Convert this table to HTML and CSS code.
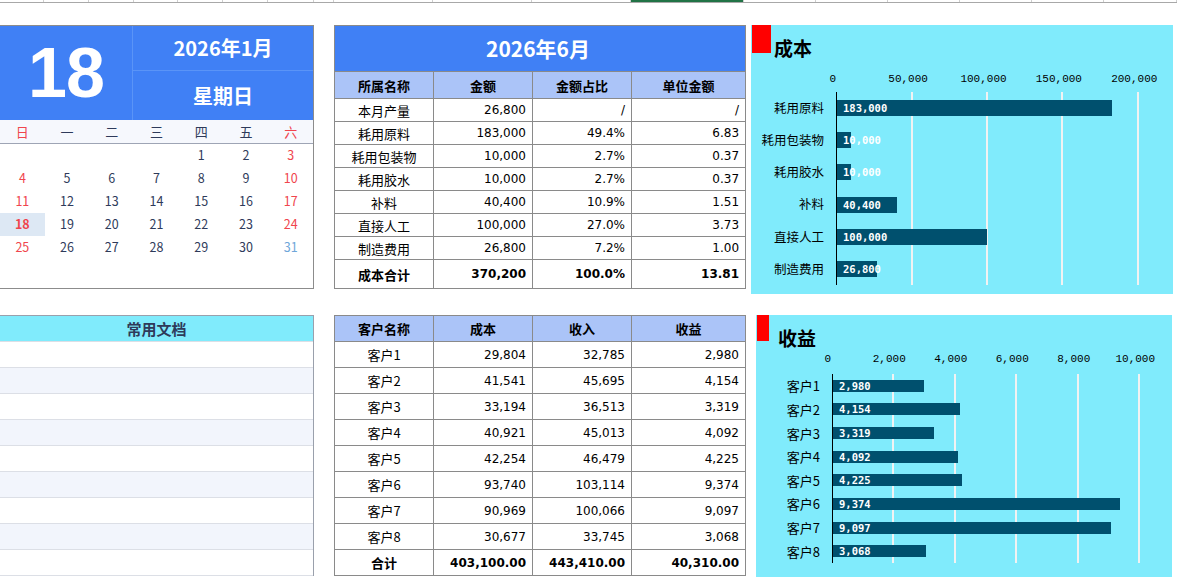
FILE: index.html
```html
<!DOCTYPE html>
<html lang="zh">
<head>
<meta charset="utf-8">
<title>成本收益看板</title>
<link rel="stylesheet" href="styles.css">
</head>
<body>
<div class="topbar">
  <span class="cell" style="width:44px"></span><span class="cell" style="width:45px"></span><span class="cell" style="width:45px"></span><span class="cell" style="width:44px"></span><span class="cell" style="width:45px"></span><span class="cell" style="width:45px"></span><span class="cell" style="width:46px"></span><span class="cell" style="width:20px"></span><span class="cell" style="width:99px"></span><span class="cell" style="width:99px"></span><span class="cell" style="width:99px"></span><span class="cell sel" style="width:113px"></span><span class="cell" style="width:72px"></span><span class="cell" style="width:72px"></span><span class="cell" style="width:72px"></span><span class="cell" style="width:72px"></span><span class="cell" style="width:72px"></span><span class="cell" style="width:73px"></span>
</div>

<div class="row row-top">
  <section class="calendar">
    <div class="cal-head">
      <div class="cal-day">18</div>
      <div class="cal-month">2026年1月</div>
      <div class="cal-weekday">星期日</div>
    </div>
    <div class="cal-week">
      <span class="red">日</span><span>一</span><span>二</span><span>三</span><span>四</span><span>五</span><span class="red">六</span>
    </div>
    <div class="cal-dates">
      <span></span><span></span><span></span><span></span><span>1</span><span>2</span><span class="red">3</span>
      <span class="red">4</span><span>5</span><span>6</span><span>7</span><span>8</span><span>9</span><span class="red">10</span>
      <span class="red">11</span><span>12</span><span>13</span><span>14</span><span>15</span><span>16</span><span class="red">17</span>
      <span class="red today">18</span><span>19</span><span>20</span><span>21</span><span>22</span><span>23</span><span class="red">24</span>
      <span class="red">25</span><span>26</span><span>27</span><span>28</span><span>29</span><span>30</span><span class="blue">31</span>
    </div>
  </section>

  <table class="sheet-table cost-table">
    <colgroup><col class="c1"><col class="c2"><col class="c3"><col class="c4"></colgroup>
    <tr class="title-row"><td colspan="4">2026年6月</td></tr>
    <tr class="head-row"><th>所属名称</th><th>金额</th><th>金额占比</th><th>单位金额</th></tr>
    <tr><td class="name">本月产量</td><td>26,800</td><td>/</td><td>/</td></tr>
    <tr><td class="name">耗用原料</td><td>183,000</td><td>49.4%</td><td>6.83</td></tr>
    <tr><td class="name">耗用包装物</td><td>10,000</td><td>2.7%</td><td>0.37</td></tr>
    <tr><td class="name">耗用胶水</td><td>10,000</td><td>2.7%</td><td>0.37</td></tr>
    <tr><td class="name">补料</td><td>40,400</td><td>10.9%</td><td>1.51</td></tr>
    <tr><td class="name">直接人工</td><td>100,000</td><td>27.0%</td><td>3.73</td></tr>
    <tr><td class="name">制造费用</td><td>26,800</td><td>7.2%</td><td>1.00</td></tr>
    <tr class="total-row"><td class="name">成本合计</td><td>370,200</td><td>100.0%</td><td>13.81</td></tr>
  </table>

  <section class="chart chart-cost">
    <div class="chart-head"><span class="flag"></span><h2 class="chart-title">成本</h2></div>
    <div class="axis"><span>0</span><span>50,000</span><span>100,000</span><span>150,000</span><span>200,000</span></div>
    <div class="chart-body">
      <div class="cats"><span>耗用原料</span><span>耗用包装物</span><span>耗用胶水</span><span>补料</span><span>直接人工</span><span>制造费用</span></div>
      <div class="plot">
        <div class="bar-row"><div class="bar" style="width:275px">183,000</div></div>
        <div class="bar-row"><div class="bar" style="width:14px">10,000</div></div>
        <div class="bar-row"><div class="bar" style="width:14px">10,000</div></div>
        <div class="bar-row"><div class="bar" style="width:60px">40,400</div></div>
        <div class="bar-row"><div class="bar" style="width:150px">100,000</div></div>
        <div class="bar-row"><div class="bar" style="width:39.5px">26,800</div></div>
      </div>
    </div>
  </section>
</div>

<div class="row row-bottom">
  <section class="docs">
    <div class="docs-head">常用文档</div>
    <div class="doc-row"></div><div class="doc-row"></div><div class="doc-row"></div>
    <div class="doc-row"></div><div class="doc-row"></div><div class="doc-row"></div>
    <div class="doc-row"></div><div class="doc-row"></div><div class="doc-row"></div>
  </section>

  <table class="sheet-table cust-table">
    <colgroup><col class="c1"><col class="c2"><col class="c3"><col class="c4"></colgroup>
    <tr class="head-row"><th>客户名称</th><th>成本</th><th>收入</th><th>收益</th></tr>
    <tr><td class="name">客户1</td><td>29,804</td><td>32,785</td><td>2,980</td></tr>
    <tr><td class="name">客户2</td><td>41,541</td><td>45,695</td><td>4,154</td></tr>
    <tr><td class="name">客户3</td><td>33,194</td><td>36,513</td><td>3,319</td></tr>
    <tr><td class="name">客户4</td><td>40,921</td><td>45,013</td><td>4,092</td></tr>
    <tr><td class="name">客户5</td><td>42,254</td><td>46,479</td><td>4,225</td></tr>
    <tr><td class="name">客户6</td><td>93,740</td><td>103,114</td><td>9,374</td></tr>
    <tr><td class="name">客户7</td><td>90,969</td><td>100,066</td><td>9,097</td></tr>
    <tr><td class="name">客户8</td><td>30,677</td><td>33,745</td><td>3,068</td></tr>
    <tr class="total-row"><td class="name">合计</td><td>403,100.00</td><td>443,410.00</td><td>40,310.00</td></tr>
  </table>

  <section class="chart chart-profit">
    <div class="chart-head"><span class="flag"></span><h2 class="chart-title">收益</h2></div>
    <div class="axis"><span>0</span><span>2,000</span><span>4,000</span><span>6,000</span><span>8,000</span><span>10,000</span></div>
    <div class="chart-body">
      <div class="cats"><span>客户1</span><span>客户2</span><span>客户3</span><span>客户4</span><span>客户5</span><span>客户6</span><span>客户7</span><span>客户8</span></div>
      <div class="plot">
        <div class="bar-row"><div class="bar" style="width:90.5px">2,980</div></div>
        <div class="bar-row"><div class="bar" style="width:126.5px">4,154</div></div>
        <div class="bar-row"><div class="bar" style="width:101px">3,319</div></div>
        <div class="bar-row"><div class="bar" style="width:124.6px">4,092</div></div>
        <div class="bar-row"><div class="bar" style="width:128.7px">4,225</div></div>
        <div class="bar-row"><div class="bar" style="width:286.8px">9,374</div></div>
        <div class="bar-row"><div class="bar" style="width:278.3px">9,097</div></div>
        <div class="bar-row"><div class="bar" style="width:93.2px">3,068</div></div>
      </div>
    </div>
  </section>
</div>
</body>
</html>
```

FILE: styles.css
```css
* { box-sizing: border-box; }

body {
  margin: 0;
  width: 1177px;
  height: 587px;
  overflow: hidden;
  background: #ffffff;
  color: #000000;
  font-family: "Noto Sans CJK SC", sans-serif;
}

/* spreadsheet column strip at the very top */
.topbar {
  display: flex;
  height: 3px;
  border-bottom: 1px solid #a8a8a8;
}
.topbar .cell {
  flex: none;
  height: 2px;
  border-right: 1px solid #cfcfcf;
}
.topbar .cell.sel { background: #217346; }

.row {
  display: flex;
  align-items: flex-start;
}
.row-top { margin-top: 22px; }
.row-bottom { margin-top: 21px; }

/* ---------- calendar ---------- */
.calendar {
  flex: none;
  width: 314px;
  height: 264px;
  border-top: 1px solid #8c8c8c;
  border-right: 1px solid #8c8c8c;
  border-bottom: 1px solid #8c8c8c;
}
.cal-head {
  display: grid;
  grid-template-columns: 133px 1fr;
  grid-template-rows: 45px 49px;
  background: #4080f5;
  color: #ffffff;
}
.cal-day {
  grid-row: 1 / 3;
  display: flex;
  align-items: center;
  justify-content: center;
  border-right: 1px solid #5a94f7;
  font: 700 70px/1 "Liberation Sans", sans-serif;
  letter-spacing: -1px;
}
.cal-month,
.cal-weekday {
  display: flex;
  align-items: center;
  justify-content: center;
  font-size: 20px;
  font-weight: 700;
  line-height: 1;
}
.cal-month { border-bottom: 1px solid #5a94f7; }

.cal-week {
  display: grid;
  grid-template-columns: repeat(7, 1fr);
  height: 24px;
  align-items: center;
  text-align: center;
  background: #f6f8fd;
  border-bottom: 1px solid #9ea5b5;
  font-size: 13px;
  line-height: 1;
  color: #2e3a5a;
}
.cal-dates {
  display: grid;
  grid-template-columns: repeat(7, 1fr);
  grid-auto-rows: 23px;
  font-size: 12.5px;
  line-height: 1;
  color: #2e3a5a;
}
.cal-dates span {
  display: flex;
  align-items: center;
  justify-content: center;
}
.red { color: #f0454d; }
.blue { color: #6fa6d9; }
.cal-dates .today {
  background: #dde8f4;
  font-weight: 700;
}

/* ---------- tables ---------- */
.sheet-table {
  flex: none;
  width: 411px;
  margin-left: 20px;
  border-collapse: collapse;
  table-layout: fixed;
}
.sheet-table .c1, .sheet-table .c2, .sheet-table .c3 { width: 99px; }
.sheet-table .c4 { width: 114px; }

.sheet-table td,
.sheet-table th {
  border: 1px solid #8a8a8a;
  padding: 0 6px 0 2px;
  line-height: 1;
  white-space: nowrap;
}
.sheet-table td {
  text-align: right;
  font-family: "DejaVu Sans", "Noto Sans CJK SC", sans-serif;
  font-size: 12px;
}
.sheet-table td.name {
  text-align: center;
  padding: 0 2px;
  font-family: "Noto Sans CJK SC", sans-serif;
  font-size: 13px;
}
.sheet-table th {
  background: #abc4f8;
  font-size: 13px;
  font-weight: 700;
  text-align: center;
  padding: 0 2px;
}
.title-row td {
  height: 46px;
  background: #4080f5;
  color: #ffffff;
  text-align: center;
  font-family: "Noto Sans CJK SC", sans-serif;
  font-size: 21px;
  font-weight: 700;
}
.cost-table .head-row th { height: 27px; }
.cost-table td { height: 23px; }
.cost-table .title-row td { height: 46px; }
.cost-table .total-row td { height: 29px; }
.total-row td { font-weight: 700; }

.cust-table th,
.cust-table td { height: 26px; }

/* ---------- docs list ---------- */
.docs {
  flex: none;
  width: 314px;
  border-top: 1px solid #9aa0ac;
  border-right: 1px solid #9aa0ac;
}
.docs-head {
  height: 26px;
  background: #80ebfc;
  border-bottom: 1px solid #dcdfe6;
  text-align: center;
  font-size: 15px;
  font-weight: 700;
  line-height: 25px;
  color: #2e3a5a;
}
.doc-row {
  height: 26px;
  border-bottom: 1px solid #dcdfe6;
}
.doc-row:nth-child(odd) { background: #f2f5fc; }

/* ---------- charts ---------- */
.chart {
  flex: none;
  background: #80ebfc;
}
.chart-head {
  display: flex;
  align-items: flex-start;
}
.flag {
  flex: none;
  background: #ff0000;
  margin-left: 1px;
}
.chart-title {
  margin: 13px 0 0;
  font-size: 19px;
  line-height: 19px;
  font-weight: 700;
}
.axis {
  display: flex;
  font-family: "Liberation Mono", monospace;
  font-size: 11px;
  line-height: 16px;
}
.axis span {
  flex: none;
  text-align: center;
}
.chart-body { display: grid; }
.cats {
  display: flex;
  flex-direction: column;
  font-size: 12.5px;
  line-height: 1;
}
.cats span {
  flex: 1;
  display: flex;
  align-items: center;
  justify-content: flex-end;
}
.plot {
  display: flex;
  flex-direction: column;
  border-left: 1px solid #000000;
}
.bar-row {
  flex: 1;
  display: flex;
  align-items: center;
}
.bar {
  flex: none;
  background: #00506e;
  color: #ffffff;
  white-space: nowrap;
  padding-left: 6px;
  font-family: "DejaVu Sans Mono", monospace;
  font-size: 10.5px;
  font-weight: 700;
  overflow: visible;
}

/* cost chart */
.chart-cost {
  width: 422px;
  height: 269px;
  margin-left: 5px;
}
.chart-cost .chart-head { height: 41px; }
.chart-cost .flag { width: 19px; height: 28px; }
.chart-cost .chart-title { margin-left: 3px; }
.chart-cost .axis {
  height: 26px;
  align-items: center;
  padding-left: 44px;
}
.chart-cost .axis span { width: 75.4px; }
.chart-cost .chart-body {
  grid-template-columns: 73px 337px;
  column-gap: 12px;
  height: 193px;
}
.chart-cost .plot {
  background-image: linear-gradient(to right,
    transparent 74px, #f2f2f2 74px 76px,
    transparent 76px 149px, #f2f2f2 149px 151px,
    transparent 151px 224.5px, #f2f2f2 224.5px 226.5px,
    transparent 226.5px 300px, #f2f2f2 300px 302px,
    transparent 302px);
}
.chart-cost .bar { height: 16px; line-height: 16px; }

/* profit chart */
.chart-profit {
  width: 416px;
  height: 262px;
  margin-left: 10px;
}
.chart-profit .chart-head { height: 36px; }
.chart-profit .flag { width: 12px; height: 26px; }
.chart-profit .chart-title { margin-left: 9px; }
.chart-profit .axis {
  height: 23px;
  align-items: flex-start;
  padding-left: 41px;
}
.chart-profit .axis span { width: 61.5px; }
.chart-profit .chart-body {
  grid-template-columns: 64px 340px;
  column-gap: 12px;
  height: 189px;
}
.chart-profit .cats { font-size: 13px; }
.chart-profit .plot {
  background-image: linear-gradient(to right,
    transparent 58.7px, #f2f2f2 58.7px 60.7px,
    transparent 60.7px 121px, #f2f2f2 121px 123px,
    transparent 123px 182px, #f2f2f2 182px 184px,
    transparent 184px 244px, #f2f2f2 244px 246px,
    transparent 246px 305px, #f2f2f2 305px 307px,
    transparent 307px);
}
.chart-profit .bar { height: 12px; line-height: 12px; }
```
